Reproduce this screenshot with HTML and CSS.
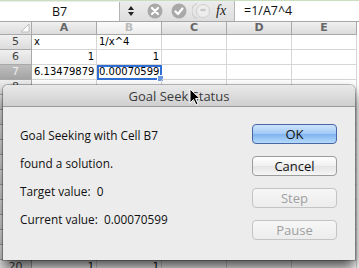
FILE: index.html
```html
<!DOCTYPE html>
<html>
<head>
<meta charset="utf-8">
<link rel="stylesheet" href="styles.css">
</head>
<body>
<div class="toolbar">
  <div class="namebox">B7</div>
  <div class="stepper">
    <svg width="8" height="14" viewBox="0 0 8 14"><path d="M4 2 L7 6 L1 6 Z" fill="#222"/><path d="M1 8 L7 8 L4 12 Z" fill="#222"/></svg>
  </div>
  <div class="tbicon">
    <svg width="16" height="16" viewBox="0 0 16 16"><circle cx="8" cy="8" r="7.5" fill="#a9a9a9"/><path d="M5 5 L11 11 M11 5 L5 11" stroke="#fff" stroke-width="2.2" stroke-linecap="round"/></svg>
  </div>
  <div class="tbicon">
    <svg width="16" height="16" viewBox="0 0 16 16"><circle cx="8" cy="8" r="7.5" fill="#a9a9a9"/><path d="M4.5 8.5 L7 11 L11.5 5.5" stroke="#fff" stroke-width="2.2" fill="none" stroke-linecap="round" stroke-linejoin="round"/></svg>
  </div>
  <div class="tbicon wide">
    <svg width="20" height="18" viewBox="0 0 20 18"><path d="M5 1.5 A8 8 0 0 0 5 16.5" stroke="#c4c4c4" stroke-width="1" fill="none"/><circle cx="11" cy="9" r="6.5" fill="#ededed" stroke="#d0d0d0"/><ellipse cx="11" cy="8" rx="3" ry="1.3" fill="#c8c8c8"/></svg>
  </div>
  <div class="fx">fx</div>
  <div class="formula">=1/A7^4</div>
</div>
<div class="sheet">
  <div class="corner"><svg width="10" height="10" viewBox="0 0 10 10"><path d="M9 1 L9 9 L1 9 Z" fill="#fff" stroke="#bbb"/></svg></div>
  <div class="colh">A</div>
  <div class="colh sel">B</div>
  <div class="colh">C</div>
  <div class="colh">D</div>
  <div class="colh">E</div>

  <div class="rowh">5</div><div class="cell">x</div><div class="cell">1/x^4</div><div class="cell"></div><div class="cell"></div><div class="cell"></div>
  <div class="rowh">6</div><div class="cell num">1</div><div class="cell num">1</div><div class="cell"></div><div class="cell"></div><div class="cell"></div>
  <div class="rowh selr">7</div><div class="cell num">6.13479879</div><div class="cell num active">0.00070599<span class="handle"></span></div><div class="cell"></div><div class="cell"></div><div class="cell"></div>
  <div class="rowh">8</div><div class="cell"></div><div class="cell"></div><div class="cell"></div><div class="cell"></div><div class="cell"></div>
  <div class="rowh"></div><div class="cell"></div><div class="cell"></div><div class="cell"></div><div class="cell"></div><div class="cell"></div>
  <div class="rowh"></div><div class="cell"></div><div class="cell"></div><div class="cell"></div><div class="cell"></div><div class="cell"></div>
  <div class="rowh"></div><div class="cell"></div><div class="cell"></div><div class="cell"></div><div class="cell"></div><div class="cell"></div>
  <div class="rowh"></div><div class="cell"></div><div class="cell"></div><div class="cell"></div><div class="cell"></div><div class="cell"></div>
  <div class="rowh"></div><div class="cell"></div><div class="cell"></div><div class="cell"></div><div class="cell"></div><div class="cell"></div>
  <div class="rowh"></div><div class="cell"></div><div class="cell"></div><div class="cell"></div><div class="cell"></div><div class="cell"></div>
  <div class="rowh"></div><div class="cell"></div><div class="cell"></div><div class="cell"></div><div class="cell"></div><div class="cell"></div>
  <div class="rowh"></div><div class="cell"></div><div class="cell"></div><div class="cell"></div><div class="cell"></div><div class="cell"></div>
  <div class="rowh"></div><div class="cell"></div><div class="cell"></div><div class="cell"></div><div class="cell"></div><div class="cell"></div>
  <div class="rowh"></div><div class="cell"></div><div class="cell"></div><div class="cell"></div><div class="cell"></div><div class="cell"></div>
  <div class="rowh"></div><div class="cell"></div><div class="cell"></div><div class="cell"></div><div class="cell"></div><div class="cell"></div>
  <div class="rowh">20</div><div class="cell num">1</div><div class="cell num">1</div><div class="cell"></div><div class="cell"></div><div class="cell"></div>
</div>

<div class="dialog">
  <div class="titlebar">Goal Seek Status</div>
  <div class="dbody">
    <div class="msgs">
      <div class="msg">Goal Seeking with Cell B7</div>
      <div class="msg">found a solution.</div>
      <div class="msg">Target value:&nbsp; 0</div>
      <div class="msg">Current value:&nbsp; 0.00070599</div>
    </div>
    <div class="buttons">
      <div class="btn default">OK</div>
      <div class="btn">Cancel</div>
      <div class="btn disabled">Step</div>
      <div class="btn disabled">Pause</div>
    </div>
  </div>
</div>

<svg class="cursor" width="12" height="19" viewBox="0 0 12 19"><path d="M1 1 L1 15 L4.5 11.5 L7 17 L9 16 L6.6 10.6 L11 10.6 Z" fill="#000" stroke="#fff" stroke-width="1"/></svg>
</body>
</html>
```

FILE: styles.css
```css
html, body {
  margin: 0;
  padding: 0;
}
body {
  width: 359px;
  height: 268px;
  overflow: hidden;
  position: relative;
  background: #fff;
  font-family: "DejaVu Sans", Verdana, sans-serif;
}
.toolbar {
  border-top: 1px solid #c9dfbf;
  background: linear-gradient(#ececec, #dedede);
  display: flex;
  align-items: center;
  box-sizing: border-box;
  height: 22px;
  border-bottom: 1px solid #a6a6a6;
}
.namebox {
  width: 120px;
  height: 19px;
  background: #fff;
  border-right: 1px solid #b5b5b5;
  box-sizing: border-box;
  text-align: center;
  font-family: "Open Sans", "DejaVu Sans", sans-serif;
  font-size: 12.5px;
  line-height: 19px;
  color: #111;
}
.stepper {
  width: 16px;
  display: flex;
  justify-content: center;
  align-items: center;
  margin-left: 3px;
}
.tbicon {
  width: 16px;
  height: 16px;
  margin-left: 8px;
  display: flex;
}
.tbicon.wide {
  width: 20px;
  height: 18px;
  margin-left: 5px;
}
.fx {
  font-family: "Liberation Serif", serif;
  font-style: italic;
  font-size: 14px;
  color: #222;
  margin-left: 4px;
  width: 12px;
}
.formula {
  flex: 1;
  height: 20px;
  background: #fff;
  border-left: 1px solid #b5b5b5;
  margin-left: 6px;
  font-family: "Open Sans", "DejaVu Sans", sans-serif;
  font-size: 12.5px;
  line-height: 19px;
  padding-left: 9px;
  color: #111;
}
.sheet {
  display: grid;
  grid-template-columns: 32px 65px 65px 65px 65px 65px;
  grid-template-rows: 13px repeat(16, 15px);
}
.corner, .colh, .rowh {
  background: linear-gradient(#f0f0f0, #dcdcdc);
  box-sizing: border-box;
  border-right: 1px solid #a9a9a9;
  border-bottom: 1px solid #a9a9a9;
  color: #555;
  font-size: 11px;
  text-align: center;
}
.corner {
  display: flex;
  justify-content: flex-end;
  align-items: flex-end;
  padding: 0 1px 1px 0;
}
.colh {
  line-height: 12px;
  font-weight: bold;
  color: #666;
}
.colh.sel {
  background: linear-gradient(#fbfbfb, #ececec);
  color: #bbb;
}
.rowh {
  line-height: 14px;
  font-size: 11px;
  color: #444;
}
.rowh.selr {
  background: linear-gradient(#bdbdbd, #a4a4a4);
  color: #eee;
}
.cell {
  box-sizing: border-box;
  border-right: 1px solid #d6d6d6;
  border-bottom: 1px solid #d6d6d6;
  font-size: 10px;
  line-height: 14px;
  padding: 0 2px;
  color: #000;
  white-space: nowrap;
  position: relative;
}
.cell.num {
  text-align: right;
}
.cell.active {
  outline: 2px solid #2f6fd3;
  outline-offset: -2px;
  padding-right: 3px;
}
.handle {
  position: absolute;
  right: -3px;
  bottom: -3px;
  width: 5px;
  height: 5px;
  background: #6c9ae0;
  border: 1px solid #fff;
}
.dialog {
  position: absolute;
  left: 3px;
  top: 85px;
  width: 352px;
  height: 175px;
  background: #ececec;
  border-radius: 5px 5px 0 0;
  box-shadow: 0 8px 14px rgba(0,0,0,0.7), 0 0 0 1px rgba(0,0,0,0.25);
  display: flex;
  flex-direction: column;
  font-family: "Open Sans", "DejaVu Sans", sans-serif;
}
.titlebar {
  height: 22px;
  box-sizing: border-box;
  border-radius: 5px 5px 0 0;
  background: linear-gradient(#e9e9e9, #cfcfcf);
  border-bottom: 1px solid #9a9a9a;
  text-align: center;
  font-size: 13px;
  line-height: 22px;
  color: #3a3a3a;
}
.dbody {
  flex: 1;
  display: flex;
}
.msgs {
  padding: 20px 0 0 17px;
  flex: 1;
  display: flex;
  flex-direction: column;
  gap: 12px;
}
.msg {
  font-size: 11.8px;
  line-height: 16px;
  height: 16px;
  color: #111;
}
.buttons {
  display: flex;
  flex-direction: column;
  gap: 12px;
  padding: 17px 18px 0 0;
}
.btn {
  width: 85px;
  height: 20px;
  box-sizing: border-box;
  border: 1px solid #9c9c9c;
  border-radius: 4px;
  background: linear-gradient(#ffffff, #f0f0f0 50%, #e4e4e4 51%, #f6f6f6);
  text-align: center;
  font-size: 13px;
  line-height: 18px;
  color: #111;
}
.btn.default {
  border-color: #4a66a8;
  background: linear-gradient(#cfe4fb, #9fc8f5 50%, #7eb3ef 51%, #b5dbfb);
}
.btn.disabled {
  border-color: #c4c4c4;
  background: linear-gradient(#f7f7f7, #ececec);
  color: #a0a0a0;
}
.cursor {
  position: absolute;
  left: 189px;
  top: 88px;
}
```
